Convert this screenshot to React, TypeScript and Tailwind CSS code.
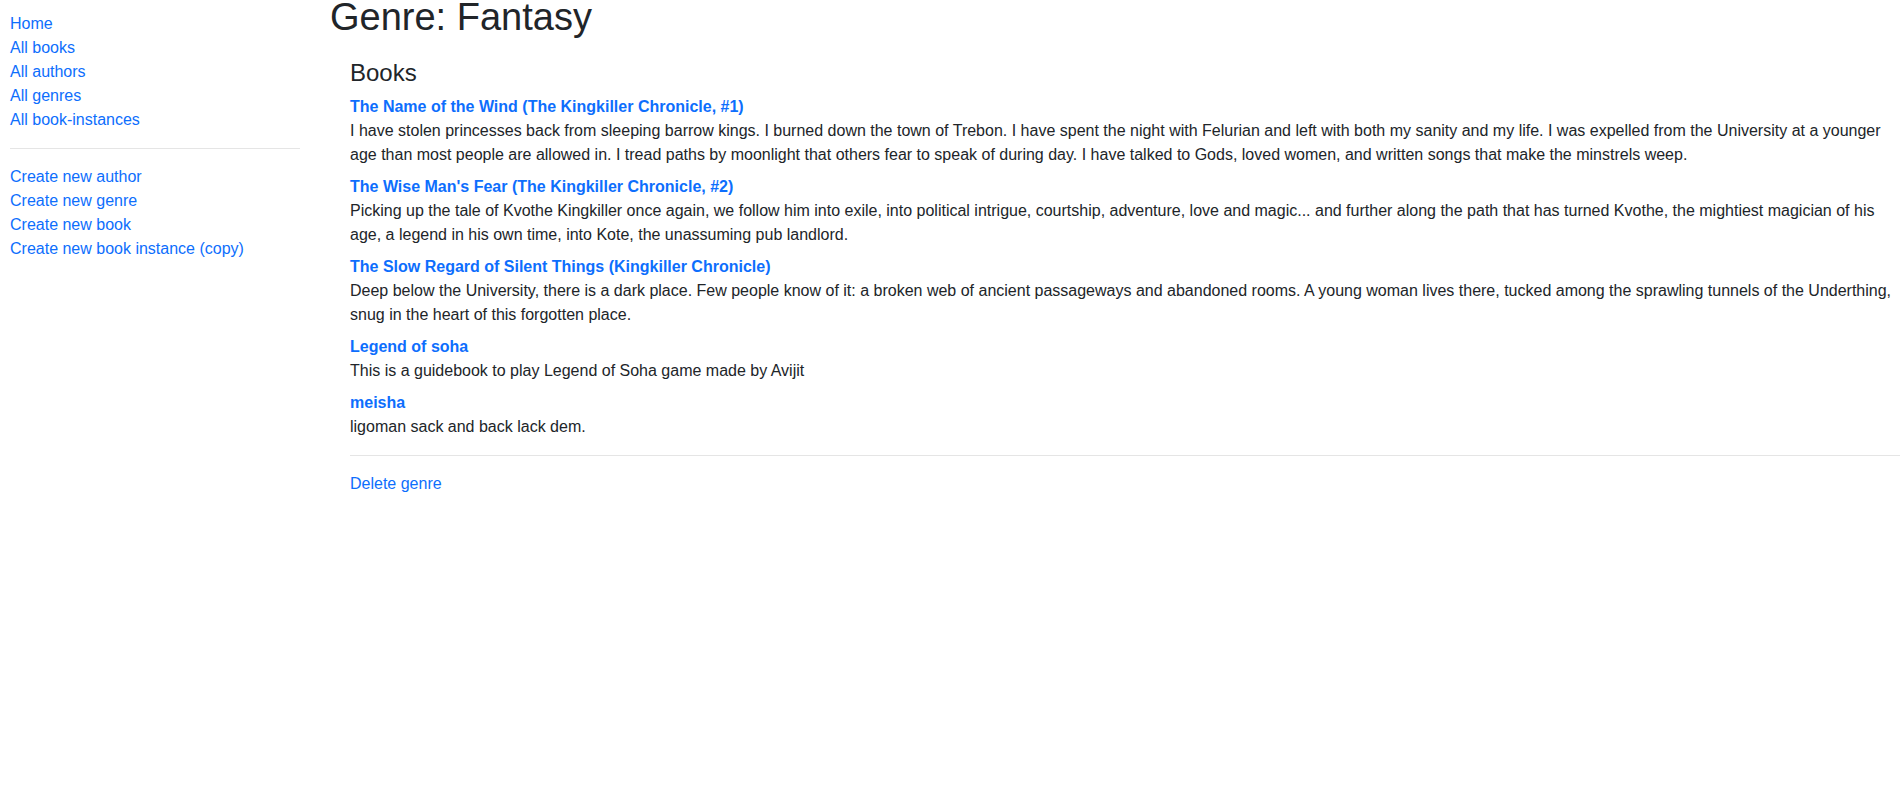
const navTop = ['Home', 'All books', 'All authors', 'All genres', 'All book-instances']
const navCreate = ['Create new author', 'Create new genre', 'Create new book', 'Create new book instance (copy)']

const books = [
  {
    title: 'The Name of the Wind (The Kingkiller Chronicle, #1)',
    summary:
      'I have stolen princesses back from sleeping barrow kings. I burned down the town of Trebon. I have spent the night with Felurian and left with both my sanity and my life. I was expelled from the University at a younger age than most people are allowed in. I tread paths by moonlight that others fear to speak of during day. I have talked to Gods, loved women, and written songs that make the minstrels weep.',
  },
  {
    title: "The Wise Man's Fear (The Kingkiller Chronicle, #2)",
    summary:
      'Picking up the tale of Kvothe Kingkiller once again, we follow him into exile, into political intrigue, courtship, adventure, love and magic... and further along the path that has turned Kvothe, the mightiest magician of his age, a legend in his own time, into Kote, the unassuming pub landlord.',
  },
  {
    title: 'The Slow Regard of Silent Things (Kingkiller Chronicle)',
    summary:
      'Deep below the University, there is a dark place. Few people know of it: a broken web of ancient passageways and abandoned rooms. A young woman lives there, tucked among the sprawling tunnels of the Underthing, snug in the heart of this forgotten place.',
  },
  { title: 'Legend of soha', summary: 'This is a guidebook to play Legend of Soha game made by Avijit' },
  { title: 'meisha', summary: 'ligoman sack and back lack dem.' },
]

export default function App() {
  return (
    <div className="min-h-screen bg-white font-['Liberation_Sans',sans-serif] text-base leading-6 text-[#212529]">
      <div className="flex">
        {/* Sidebar */}
        <aside className="w-[330px] shrink-0 pl-[10px] pr-[30px] pt-3">
          <ul className="mb-4">
            {navTop.map((l) => (
              <li key={l}>
                <a href="#" className="text-[#0d6efd]">{l}</a>
              </li>
            ))}
          </ul>
          <hr className="my-4 border-t border-[#e5e5e5]" />
          <ul>
            {navCreate.map((l) => (
              <li key={l}>
                <a href="#" className="text-[#0d6efd]">{l}</a>
              </li>
            ))}
          </ul>
        </aside>

        {/* Content */}
        <main className="min-w-0 flex-1 pr-[3px]">
          <h1 className="mb-[25px] text-[38px] leading-[34px] font-medium">Genre: Fantasy</h1>
          <div className="ml-5">
            <h4 className="mb-2 text-2xl leading-7 font-medium">Books</h4>
            <dl className="mb-4">
              {books.map((b) => (
                <div key={b.title}>
                  <dt className="font-bold">
                    <a href="#" className="text-[#0d6efd]">{b.title}</a>
                  </dt>
                  <dd className="mb-2">{b.summary}</dd>
                </div>
              ))}
            </dl>
            <hr className="my-4 border-t border-[#e5e5e5]" />
            <p>
              <a href="#" className="text-[#0d6efd]">Delete genre</a>
            </p>
          </div>
        </main>
      </div>
    </div>
  )
}
